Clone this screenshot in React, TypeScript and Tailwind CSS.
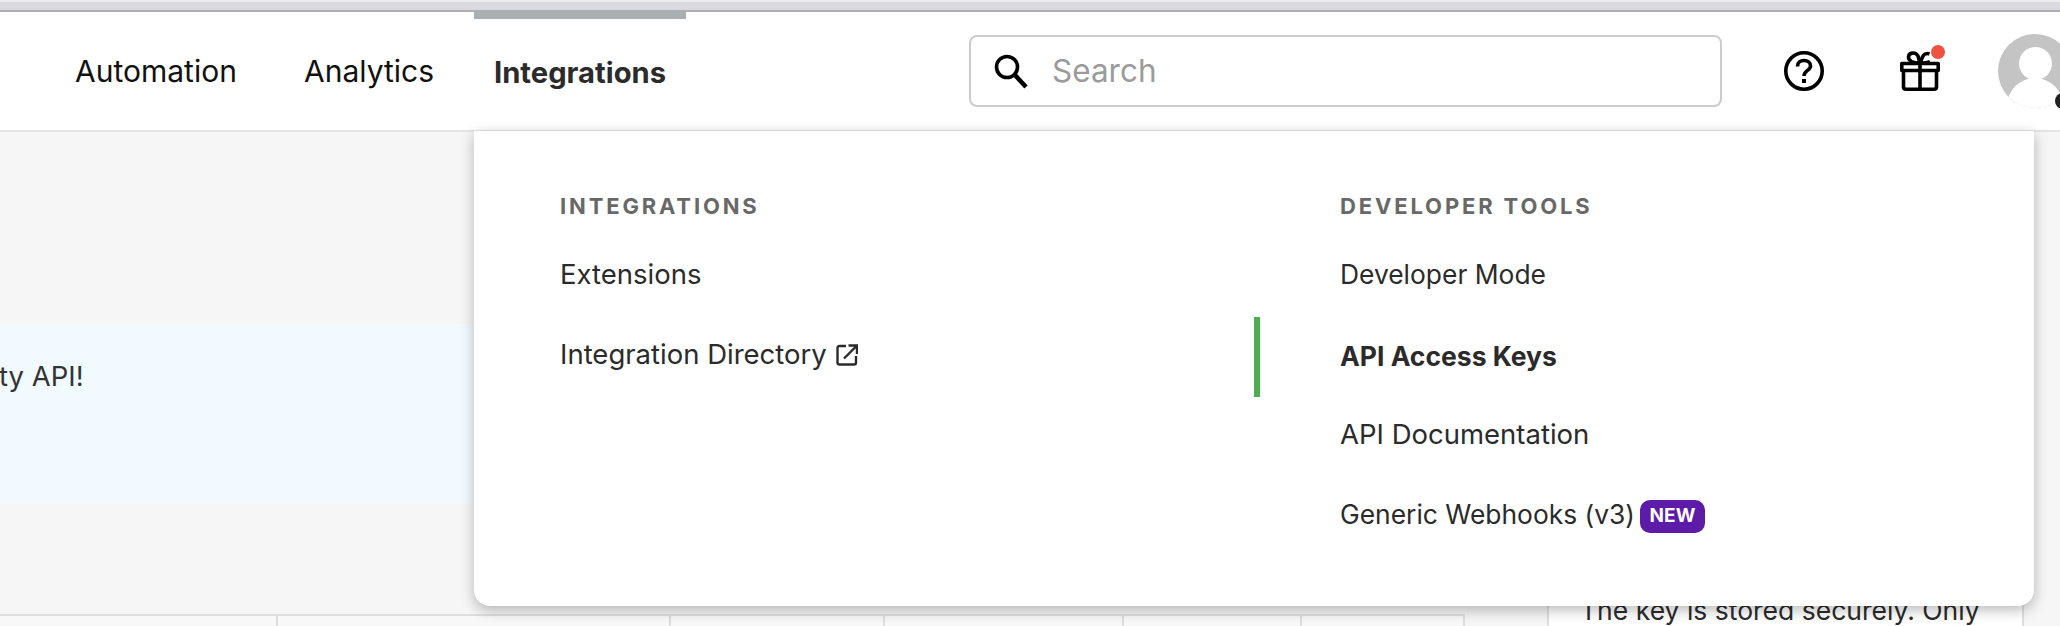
const font = 'font-["Inter",sans-serif]';

function SearchIcon() {
  return (
    <svg width="36" height="36" viewBox="0 0 36 36" fill="none" stroke="#000" className="shrink-0">
      <circle cx="14" cy="14" r="10.5" strokeWidth="3.6" />
      <path d="M21.5 21.5 L33 34" strokeWidth="4.5" />
    </svg>
  );
}

function HelpIcon() {
  return (
    <svg width="40" height="40" viewBox="0 0 40 40" fill="none" stroke="#000" className="shrink-0">
      <circle cx="20" cy="20" r="18.2" strokeWidth="3.6" />
      <path d="M13.5 15.5 C13.5 11.5 16.5 9.5 20 9.5 C23.5 9.5 26.5 11.5 26.5 15 C26.5 19.5 20 19.5 20 25" strokeWidth="3.6" />
      <rect x="18" y="28" width="4" height="4" fill="#000" stroke="none" />
    </svg>
  );
}

function GiftIcon() {
  return (
    <svg width="40" height="40" viewBox="0 0 40 40" fill="none" stroke="#000" strokeWidth="3.6" className="shrink-0">
      <path d="M1.8 12.5 H38.2 V19.5 H1.8 Z" strokeLinejoin="round" />
      <path d="M3.5 19.5 V36 Q3.5 38.2 6 38.2 H34 Q36.5 38.2 36.5 36 V19.5" />
      <path d="M20 12 V38" />
      <path d="M20 12 C13 12 8.5 10 8.5 6 C8.5 1.5 15.5 0.5 18 5 L20 12" />
      <path d="M20 12 L22.5 6 C24 3 27 2 29.5 3 M20 12 C24 12 27 12 30 10.5" />
    </svg>
  );
}

function ExternalIcon() {
  return (
    <svg width="22" height="22" viewBox="0 0 22 22" fill="none" stroke="#2b2b2b" strokeWidth="2.4" className="shrink-0">
      <path d="M10 2 H3.5 Q1.5 2 1.5 4 V18.5 Q1.5 20.5 3.5 20.5 H18 Q20 20.5 20 18.5 V12" />
      <path d="M8 14.5 L20 2.5 M12.5 1.5 H21 V10" />
    </svg>
  );
}

function MenuRow({ label, size = 'text-[27.5px]', children }: { label: string; size?: string; children?: React.ReactNode }) {
  return (
    <div className={`flex h-[80px] items-center ${size} text-[#2b2b2b]`}>
      <span>{label}</span>
      {children}
    </div>
  );
}

export default function App() {
  const cells = [278, 393, 214, 239, 178, 163];

  return (
    <div className={`${font} flex h-[626px] w-[2060px] flex-col overflow-hidden bg-[#f6f6f6]`}>
      {/* Browser strip */}
      <div className="h-[10px] shrink-0 border-t-2 border-[#eeeef0] bg-[#d9dade]" />

      {/* Top nav */}
      <header className="relative z-10 flex h-[122px] shrink-0 items-center border-t-2 border-b-2 border-t-[#b0b0b4] border-b-[#e4e4e4] bg-white">
        <nav className="flex h-full w-[969px] shrink-0 items-center pl-[75px] text-[30px] text-[#111]">
          <span className="w-[229px]">Automation</span>
          <span className="w-[170px]">Analytics</span>
          <span className="relative flex h-full w-[212px] items-center pt-[4px] pl-[20px] text-[29.2px] font-bold text-[#2b2b2b]">
            <span className="absolute -top-[2px] left-0 h-[9px] w-[212px] bg-[#a9afb2]" />
            Integrations
          </span>
        </nav>

        <div className="flex h-[72px] w-[753px] shrink-0 items-center gap-[23px] rounded-[8px] border-2 border-[#cccccc] pl-[22px]">
          <SearchIcon />
          <span className="text-[31.5px] text-[#9b9b9b]">Search</span>
        </div>

        <div className="ml-[62px]">
          <HelpIcon />
        </div>

        <div className="relative ml-[76px] h-[40px] w-[40px] shrink-0">
          <GiftIcon />
          <span className="absolute -top-[6px] -right-[5px] h-[14px] w-[14px] rounded-full bg-[#ef5241]" />
        </div>

        <div className="relative ml-[58px] h-[74px] w-[74px] shrink-0">
          <div className="relative h-full w-full overflow-hidden rounded-full bg-[#c4c4c4]">
            <span className="absolute top-[13px] left-[21px] h-[33px] w-[33px] rounded-full bg-white" />
            <span className="absolute top-[44px] left-[9px] h-[60px] w-[56px] rounded-full bg-white" />
          </div>
          <span className="absolute top-[59px] left-[57px] h-[16px] w-[16px] rounded-full bg-[#222]" />
        </div>

        {/* Integrations menu */}
        <div className="absolute top-[119px] left-[474px] grid h-[475px] w-[1560px] grid-cols-2 rounded-b-[16px] bg-white pt-[60px] shadow-[0_4px_14px_rgba(0,0,0,0.28)]">
          <div className="pl-[86px]">
            <h4 className="mt-[1px] mb-[15px] text-[22px] leading-[28px] font-bold tracking-[2.85px] text-[#686868]">INTEGRATIONS</h4>
            <MenuRow label="Extensions" />
            <MenuRow label="Integration Directory">
              <span className="ml-[9px]">
                <ExternalIcon />
              </span>
            </MenuRow>
          </div>
          <div>
            <h4 className="mt-[1px] mb-[15px] pl-[86px] text-[22px] leading-[28px] font-bold tracking-[2.85px] text-[#686868]">DEVELOPER TOOLS</h4>
            <div className="pl-[86px]">
              <MenuRow label="Developer Mode" size="text-[26.4px]" />
            </div>
            <div className="relative flex h-[80px] items-center pt-[3px] pl-[86px] text-[26.5px] font-bold text-[#2b2b2b]">
              <span className="absolute top-[2px] left-0 h-[80px] w-[6px] bg-[#4caf50]" />
              API Access Keys
            </div>
            <div className="pl-[86px]">
              <MenuRow label="API Documentation" />
            </div>
            <div className="pl-[86px]">
              <MenuRow label="Generic Webhooks (v3)" size="text-[26.4px]">
                <span className="mt-[2px] ml-[5px] flex h-[33px] w-[65px] items-center justify-center rounded-[10px] bg-[#5c1ca8] text-[19px] font-bold text-white">NEW</span>
              </MenuRow>
            </div>
          </div>
        </div>
      </header>

      {/* Page content behind the menu */}
      <main className="flex min-h-0 flex-1">
        <div className="flex w-[1465px] shrink-0 flex-col">
          <div className="mt-[192px] flex h-[180px] items-start bg-[#f1faff] pt-[32px] text-[27.5px] text-[#333]">
            <span className="-ml-[1px]">ty API!</span>
          </div>
          <div className="mt-[110px] flex flex-1 border-t-2 border-[#dedede] bg-[#f8f8f8]">
            {cells.map((w) => (
              <div key={w} className="h-full border-r-2 border-[#dedede]" style={{ width: w }} />
            ))}
          </div>
        </div>
        <aside className="ml-[82px] w-[477px] shrink-0 self-stretch border-x-2 border-[#dedede] bg-white pt-[459px] pl-[31px] text-[26.5px] whitespace-nowrap text-[#2b2b2b]">
          The key is stored securely. Only
        </aside>
      </main>
    </div>
  );
}
